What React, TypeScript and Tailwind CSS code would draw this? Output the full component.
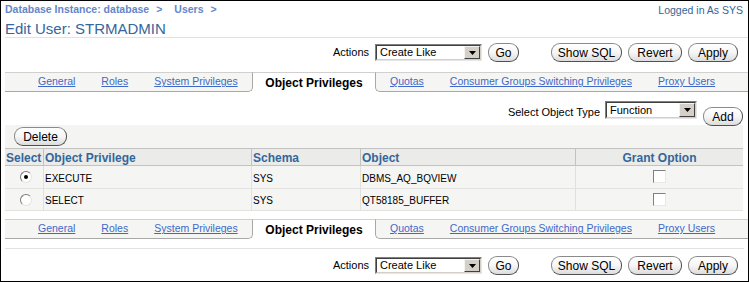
import React from 'react';

const linkCls = 'text-[#3f68c8] underline underline-offset-[1px]';

function Button({ label, className }: { label: string; className: string }) {
  return (
    <button
      className={`flex h-[19px] items-center justify-center rounded-[9px] border border-[#8a8a8a] border-r-[#505050] border-b-[#505050] bg-linear-to-b from-white via-[#f6f6f6] to-[#dcdcdc] text-[12px] leading-none text-black ${className}`}
    >
      {label}
    </button>
  );
}

function Combo({ value, className }: { value: string; className: string }) {
  return (
    <div className={`flex border border-t-[#808080] border-l-[#808080] border-r-[#e6e6e6] border-b-[#e6e6e6] ${className}`}>
      <div className="flex flex-1 items-stretch border border-t-[#404040] border-l-[#404040] border-r-[#d4d0c8] border-b-[#d4d0c8] bg-white">
        <span className="flex flex-1 items-center pl-[3px] text-[11px] text-black">{value}</span>
        <span className="flex w-[16px] items-center justify-center border border-t-[#f4f4f4] border-l-[#f4f4f4] border-r-[#404040] border-b-[#404040] bg-[#d4d0c8]">
          <svg width="7" height="4" viewBox="0 0 7 4">
            <path d="M0 0h7L3.5 4z" fill="#000" />
          </svg>
        </span>
      </div>
    </div>
  );
}

function Radio({ checked }: { checked?: boolean }) {
  return (
    <span className="flex h-[12px] w-[12px] items-center justify-center rounded-full border border-t-[#7a7a7a] border-l-[#7a7a7a] border-r-[#e4e4e4] border-b-[#e4e4e4] bg-white">
      {checked && <span className="h-[4px] w-[4px] rounded-full bg-black" />}
    </span>
  );
}

function Checkbox() {
  return (
    <span className="block h-[13px] w-[13px] border border-t-[#808080] border-l-[#808080] border-r-[#e8e8e8] border-b-[#e8e8e8] bg-white" />
  );
}

function TabBar() {
  return (
    <div className="ml-[4px] flex h-[20px] text-[10.5px]">
      <div className="flex w-[248px] items-center gap-[26px] rounded-br-[5px] border-t border-r border-b border-t-[#d0d0d0] border-r-[#a8a8a8] border-b-[#a8a8a8] bg-[#f5f5f3] pl-[33px]">
        <a className={linkCls}>General</a>
        <a className={linkCls}>Roles</a>
        <a className={linkCls}>System Privileges</a>
      </div>
      <div className="flex w-[122px] items-center justify-center border-t border-[#d0d0d0] bg-white text-[12px] font-bold text-black">
        Object Privileges
      </div>
      <div className="flex flex-1 items-center gap-[26px] rounded-bl-[5px] border-t border-l border-b border-t-[#d0d0d0] border-l-[#a8a8a8] border-b-[#a8a8a8] bg-[#f5f5f3] pl-[14px]">
        <a className={linkCls}>Quotas</a>
        <a className={linkCls}>Consumer Groups Switching Privileges</a>
        <a className={linkCls}>Proxy Users</a>
      </div>
    </div>
  );
}

function ActionsRow() {
  return (
    <div className="flex h-[19px] items-center justify-end pr-[10px] text-[11px] text-black">
      <span className="mr-[6px]">Actions</span>
      <Combo value="Create Like" className="h-[17px] w-[107px]" />
      <Button label="Go" className="ml-[6px] w-[31px]" />
      <Button label="Show SQL" className="ml-[32px] w-[71px]" />
      <Button label="Revert" className="ml-[6px] w-[54px]" />
      <Button label="Apply" className="ml-[6px] w-[50px]" />
    </div>
  );
}

const rows = [
  { checked: true, priv: 'EXECUTE', schema: 'SYS', object: 'DBMS_AQ_BQVIEW', h: 'h-[23px]' },
  { checked: false, priv: 'SELECT', schema: 'SYS', object: 'QT58185_BUFFER', h: 'h-[22px]' },
];

export default function App() {
  return (
    <div className="h-[282px] w-[749px] overflow-hidden border border-black bg-white font-['Liberation_Sans',Arial,sans-serif]">
      <div className="flex h-[17px] items-center justify-between pl-[4px] pr-[5px]">
        <div className="flex gap-[7px] pt-[1px] text-[10.5px] font-bold text-[#6486c9]">
          <span>Database Instance: database</span>
          <span>&gt;</span>
          <span className="ml-[5px]">Users</span>
          <span>&gt;</span>
        </div>
        <span className="pt-[2px] text-[10.5px] text-[#336699]">Logged in As SYS</span>
      </div>
      <div className="flex h-[19px] items-center pt-[3px] pl-[4px] text-[15px] text-[#36669c]">Edit User: STRMADMIN</div>
      <div className="ml-[4px] h-px bg-[#e2e2e2]" />

      <div className="h-[34px] pt-[5px]">
        <ActionsRow />
      </div>

      <TabBar />

      <div className="flex h-[33px] items-start justify-end pr-[5px] text-[11px] text-black">
        <span className="mt-[12px] mr-[5px]">Select Object Type</span>
        <Combo value="Function" className="mt-[9px] h-[18px] w-[92px]" />
        <Button label="Add" className="mt-[15px] ml-[6px] h-[18px] w-[40px]" />
      </div>

      <div className="ml-[4px] h-[85px] w-[738px] bg-[#f4f4f2] pt-[2px]">
        <Button label="Delete" className="ml-[9px] h-[18px] w-[53px]" />
        <div className="mt-[2px]">
          <div className="grid h-[18px] grid-cols-[38px_208px_109px_215px_1fr] border-y border-[#c2c2c2] bg-[#ebebe9] text-[12px] font-bold text-[#336699]">
            <div className="flex items-center pl-[1px]">Select</div>
            <div className="flex items-center border-l border-[#c2c2c2] pl-[1px]">Object Privilege</div>
            <div className="flex items-center border-l border-[#c2c2c2] pl-[1px]">Schema</div>
            <div className="flex items-center border-l border-[#c2c2c2] pl-[1px]">Object</div>
            <div className="flex items-center justify-center border-l border-[#c2c2c2]">Grant Option</div>
          </div>
          {rows.map((r) => (
            <div
              key={r.priv}
              className={`grid grid-cols-[38px_208px_109px_215px_1fr] border-b border-[#e2e2e0] bg-[#f5f5f4] text-[10px] text-black ${r.h}`}
            >
              <div className="flex items-start pt-[5px] pl-[15px]">
                <Radio checked={r.checked} />
              </div>
              <div className="flex items-end border-l border-[#e0e0de] pb-[2px] pl-[1px]">{r.priv}</div>
              <div className="flex items-end border-l border-[#e0e0de] pb-[2px] pl-[1px]">{r.schema}</div>
              <div className="flex items-end border-l border-[#e0e0de] pb-[2px] pl-[1px]">{r.object}</div>
              <div className="flex justify-center border-l border-[#e0e0de] pt-[4px]">
                <Checkbox />
              </div>
            </div>
          ))}
        </div>
      </div>

      <div className="mt-[9px]">
        <TabBar />
      </div>
      <div className="mt-[9px] ml-[4px] mr-[4px] h-px bg-[#e2e2e2]" />
      <div className="mt-[7px]">
        <ActionsRow />
      </div>
    </div>
  );
}
